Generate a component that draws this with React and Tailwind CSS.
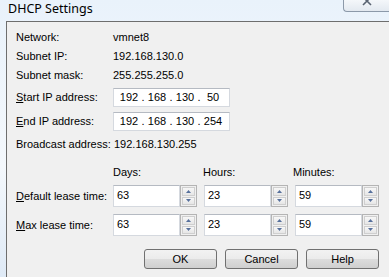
import React from "react";

const ipStart = ["192", "168", "130", "50"];
const ipEnd = ["192", "168", "130", "254"];

const leases = [
  { key: "D", rest: "efault lease time:", values: ["63", "23", "59"] },
  { key: "M", rest: "ax lease time:", values: ["63", "23", "59"] },
];

const IpField = ({ parts }) => (
  <div className="w-[117px] h-[19px] bg-white border border-[#d5d9df] border-t-[#b5bac2] flex items-center pl-[5px]">
    {parts.map((p, i) => (
      <React.Fragment key={i}>
        {i > 0 && <span className="w-[8px] text-center">.</span>}
        <span className="w-[20px] text-center">{p}</span>
      </React.Fragment>
    ))}
  </div>
);

const Arrow = ({ up }) => (
  <svg width="5" height="3" viewBox="0 0 5 3">
    <path d={up ? "M0 3 L2.5 0 L5 3 Z" : "M0 0 L2.5 3 L5 0 Z"} fill="#56709c" />
  </svg>
);

const Spin = ({ value }) => (
  <div className="flex w-[84px] h-[22px]">
    <div className="flex-1 bg-white border border-[#d5d9df] border-t-[#b5bac2] pl-[3px] pt-[2px] leading-[14px]">
      {value}
    </div>
    <div className="w-[17px] h-full border border-[#b4b4b4] bg-[#f0f0f0] flex flex-col p-px gap-px">
      <div className="flex-1 border border-[#cfcfcf] bg-gradient-to-b from-[#f7f7f7] to-[#e6e6e6] flex items-center justify-center">
        <Arrow up />
      </div>
      <div className="flex-1 border border-[#cfcfcf] bg-gradient-to-b from-[#f7f7f7] to-[#e6e6e6] flex items-center justify-center">
        <Arrow />
      </div>
    </div>
  </div>
);

const Btn = ({ children }) => (
  <button className="w-[73px] h-[20px] rounded-[3px] border border-[#707070] bg-[linear-gradient(to_bottom,#f2f2f2_0%,#ebebeb_50%,#dddddd_50%,#cfcfcf_100%)] text-[11px] text-black leading-none">
    {children}
  </button>
);

const Row = ({ label, children }) => (
  <div className="h-[19px] flex items-center">
    <div className="w-[97px] shrink-0 whitespace-nowrap">{label}</div>
    {children}
  </div>
);

export default function App() {
  return (
    <div className="w-[389px] h-[277px] overflow-hidden relative flex flex-col bg-[linear-gradient(to_bottom,#e9f2fb,#f4f8fc_60%,#dfeaf6)] font-['Liberation_Sans',Arial,sans-serif] text-[11px] text-black">
      {/* title bar */}
      <div className="h-[21px] shrink-0 pl-[8px] pt-[1px] font-['Noto_Sans',sans-serif] text-[12.5px] leading-[15px] text-black">
        DHCP Settings
      </div>
      <div className="absolute top-0 left-[343px] w-[60px] h-[12px] rounded-bl-[4px] border-l border-b border-[#8c99a9] bg-[linear-gradient(to_bottom,#f4f7fa,#e3e9f0)]">
        <svg className="absolute left-[18px] -top-[3px]" width="10" height="9" viewBox="0 0 10 9">
          <path d="M1 0 L9 8 M9 0 L1 8" stroke="#5a6472" strokeWidth="1.6" />
        </svg>
      </div>

      {/* client area */}
      <div className="flex-1 ml-[6px] border-l border-t border-[#6e6e6e] bg-[#f0f0f0] pl-[9px] pt-[6px] flex flex-col">
        <Row label="Network:">vmnet8</Row>
        <Row label="Subnet IP:">192.168.130.0</Row>
        <Row label="Subnet mask:">255.255.255.0</Row>
        <div className="mt-[3px]">
          <Row label={<><u>S</u>tart IP address:</>}>
            <IpField parts={ipStart} />
          </Row>
        </div>
        <div className="mt-[5px]">
          <Row label={<><u>E</u>nd IP address:</>}>
            <IpField parts={ipEnd} />
          </Row>
        </div>
        <div className="mt-[4px]">
          <Row label="Broadcast address:">
            <span className="ml-px">192.168.130.255</span>
          </Row>
        </div>

        <div className="mt-[9px] h-[19px] flex items-center">
          <div className="w-[97px] shrink-0" />
          <div className="flex gap-[7px]">
            <div className="w-[84px]">Days:</div>
            <div className="w-[84px] -ml-px">Hours:</div>
            <div className="w-[84px] -ml-px">Minutes:</div>
          </div>
        </div>

        {leases.map((l, i) => (
          <div key={l.key} className={`${i === 0 ? "mt-[3px]" : "mt-[7px]"} h-[22px] flex items-center`}>
            <div className="w-[97px] shrink-0 whitespace-nowrap">
              <u>{l.key}</u>
              {l.rest}
            </div>
            <div className="flex gap-[7px]">
              {l.values.map((v, j) => (
                <Spin key={j} value={v} />
              ))}
            </div>
          </div>
        ))}

        <div className="mt-[13px] flex gap-[8px] pl-[128px]">
          <Btn>OK</Btn>
          <Btn>Cancel</Btn>
          <Btn>Help</Btn>
        </div>
      </div>
    </div>
  );
}
